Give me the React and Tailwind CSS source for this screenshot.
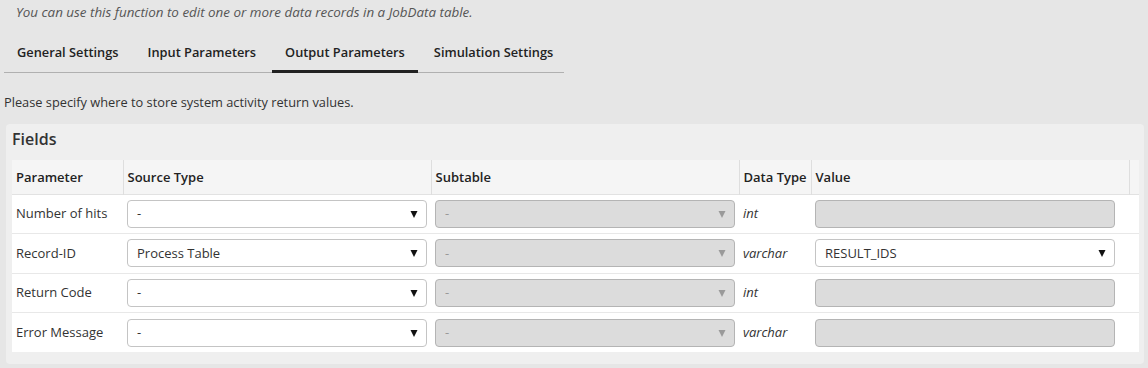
import React from "react";

const FONT = { fontFamily: '"Open Sans", "Liberation Sans", sans-serif' };

function Arrow({ disabled }) {
  return (
    <svg width="8" height="8" viewBox="0 0 8 8" className="shrink-0">
      <polygon points="0.5,1 7.5,1 4,8" fill={disabled ? "#9a9a9a" : "#111"} />
    </svg>
  );
}

function Select({ value, disabled }) {
  return (
    <div
      className={
        "h-[28px] w-[300px] rounded-[4px] border flex items-center justify-between pl-[9px] pr-[8px] text-[13px] " +
        (disabled
          ? "bg-[#dcdcdc] border-[#b4b4b4] text-[#999]"
          : "bg-white border-[#c4c4c4] text-[#333]")
      }
    >
      <span>{value}</span>
      <Arrow disabled={disabled} />
    </div>
  );
}

function Input() {
  return <div className="h-[28px] w-[300px] rounded-[4px] border border-[#b4b4b4] bg-[#dcdcdc]" />;
}

const rows = [
  { name: "Number of hits", src: "-", type: "int", value: null },
  { name: "Record-ID", src: "Process Table", type: "varchar", value: "RESULT_IDS" },
  { name: "Return Code", src: "-", type: "int", value: null },
  { name: "Error Message", src: "-", type: "varchar", value: null },
];

export default function App() {
  return (
    <div className="w-[1148px] h-[368px] bg-[#e6e6e6] text-[#333] overflow-hidden" style={FONT}>
      <div className="pl-[16px] pt-[3px] h-[24px] text-[13.4px] leading-[18px] italic text-[#555] whitespace-nowrap">
        You can use this function to edit one or more data records in a JobData table.
      </div>
      <div className="ml-[4px] mt-[9px] w-[560px] border-b border-[#b0b0b0] flex gap-[3px] h-[40px]">
        {["General Settings", "Input Parameters", "Output Parameters", "Simulation Settings"].map((t, i) => (
          <div
            key={t}
            className={
              "px-[13px] pt-[2px] flex items-center whitespace-nowrap text-[12.8px] font-semibold text-[#222] border-b-[3px] mb-[-1px] " +
              (i === 2 ? "border-[#222]" : "border-transparent")
            }
          >
            {t}
          </div>
        ))}
      </div>
      <div className="pl-[4px] mt-[20px] text-[12.8px] leading-[18px] text-[#333] whitespace-nowrap">
        Please specify where to store system activity return values.
      </div>
      <div className="ml-[6px] mt-[13px] w-[1138px] h-[240px] rounded-[4px] bg-[#efefef] pl-[6px] pr-[5px]">
        <div className="h-[36px] flex items-center pb-[6px] text-[16px] font-semibold text-[#333]">Fields</div>
        <table className="w-[1127px] table-fixed border-collapse text-[13px]">
          <colgroup>
            <col className="w-[111px]" />
            <col className="w-[308px]" />
            <col className="w-[308px]" />
            <col className="w-[72px]" />
            <col className="w-[318px]" />
            <col className="w-[10px]" />
          </colgroup>
          <thead>
            <tr className="h-[34px] bg-[#f5f5f5] border-b border-[#e2e2e2]">
              {["Parameter", "Source Type", "Subtable", "Data Type", "Value", ""].map((h, i) => (
                <th
                  key={i}
                  className={
                    "text-left font-semibold px-[4px] pt-[1px] text-[#222] whitespace-nowrap " +
                    (i > 0 ? "border-l border-[#dedede]" : "")
                  }
                >
                  {h}
                </th>
              ))}
            </tr>
          </thead>
          <tbody className="bg-white">
            {rows.map((r, i) => (
              <tr key={i} className={"h-[39.5px] " + (i < 3 ? "border-b border-[#e8e8e8]" : "")}>
                <td className="px-[4px] text-[#333] whitespace-nowrap">{r.name}</td>
                <td className="px-[4px]">
                  <Select value={r.src} />
                </td>
                <td className="px-[4px]">
                  <Select value="-" disabled />
                </td>
                <td className="px-[4px] italic text-[#333]">{r.type}</td>
                <td className="px-[4px]">
                  {r.value ? <Select value={r.value} /> : <Input />}
                </td>
                <td />
              </tr>
            ))}
          </tbody>
        </table>
      </div>
    </div>
  );
}
